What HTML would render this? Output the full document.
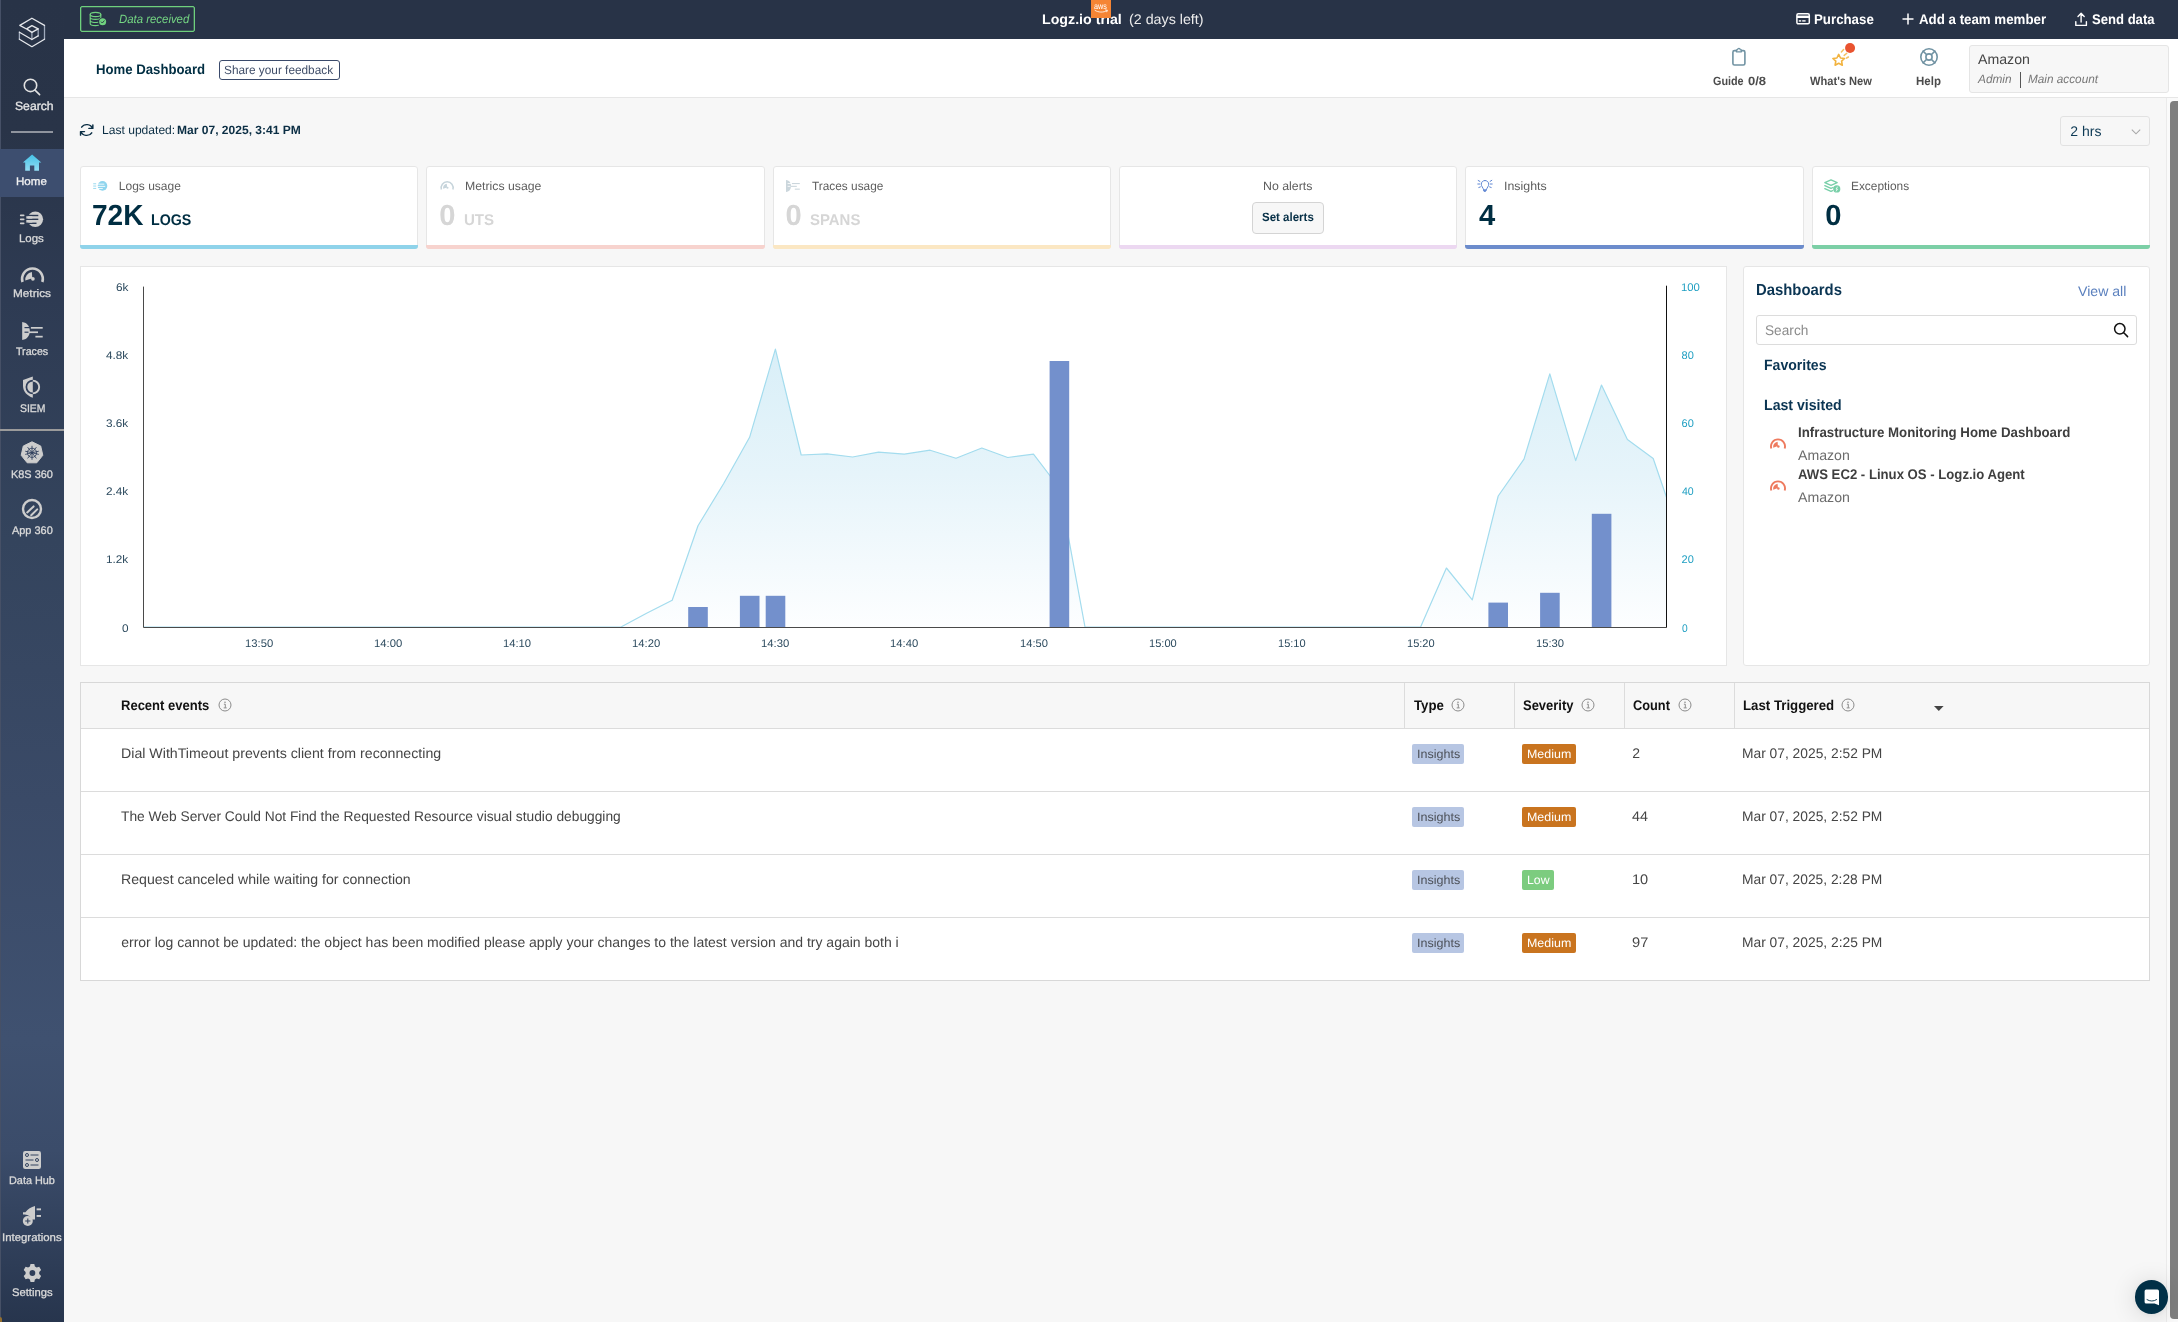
<!DOCTYPE html>
<html>
<head>
<meta charset="utf-8">
<title>Home Dashboard</title>
<style>
*{box-sizing:border-box;margin:0;padding:0}
html,body{width:2178px;height:1322px;overflow:hidden}
body{font-family:"Liberation Sans",sans-serif;background:#f7f7f7;position:relative;color:#444;font-size:14px;line-height:1}
.abs{position:absolute}
svg{position:absolute;overflow:visible}
.t{position:absolute;white-space:nowrap;line-height:1;transform-origin:0 50%;text-rendering:geometricPrecision}
#side{position:absolute;left:0;top:0;width:64px;height:1322px;background:linear-gradient(180deg,#283347 0px,#293448 130px,#2e3b53 300px,#34445d 540px,#3a4a67 800px,#3f5170 1040px,#3b4c6a 1150px,#27354d 1322px)}
#app{position:absolute;left:0;top:0;width:2178px;height:1322px;will-change:transform}
#topbar{position:absolute;left:64px;top:0;width:2114px;height:39px;background:#283347}
#header{position:absolute;left:64px;top:39px;width:2114px;height:59px;background:#fff;border-bottom:1px solid #e6e6e6}
.card{position:absolute;background:#fff;border:1px solid #e6e6e6;border-radius:3px}
.bar{position:absolute;left:-1px;right:-1px;bottom:-1px;height:4px;border-radius:0 0 3px 3px}
.badge{position:absolute;height:20px;border-radius:2px}
</style>
</head>
<body>
<div id="app"><div id="side">
<div class="abs" style="left:0;top:0;width:1px;height:1322px;background:#465066"></div>
<div class="abs" style="left:0;top:149px;width:64px;height:48px;background:#3d4e6f"></div>
<div class="abs" style="left:11px;top:131px;width:42px;height:2px;background:#8f949e"></div>
<div class="abs" style="left:0;top:429px;width:64px;height:2px;background:#9b9b9b"></div>
<svg width="64" height="1322" viewBox="0 0 64 1322" style="left:0;top:0" fill="none">
<!-- logo -->
<g stroke-width="1.3" stroke-linejoin="round" stroke-linecap="round">
<path d="M44.5 25.4 V39.2 M19.4 32.2 V39.2 M31.9 32.4 V39.5 M38.2 28.9 V35.9" stroke="#9ea9bb"/>
<path d="M27 29.3 L19.8 25.4 L31.9 18.2 L44.5 25.4 M44.5 39.2 L31.9 46.7 L19.4 39.2 M19.4 32.2 L31.9 39.5 L38.2 35.9 M38.2 28.9 L31.9 25.6 L26.6 28.9 L31.9 32.4 L38.2 28.9" stroke="#e6e8ec"/>
</g>
<!-- search -->
<g stroke="#e2e2e2" stroke-width="1.6" stroke-linecap="round"><circle cx="30.5" cy="85.4" r="6.2"/><path d="M35 90.2 L39.6 94.6"/></g>
<!-- home -->
<defs><linearGradient id="hg" x1="0" y1="0" x2="0" y2="1"><stop offset="0" stop-color="#45c1e6"/><stop offset="1" stop-color="#93def5"/></linearGradient></defs>
<path d="M32.1 154.6 L41.3 162.6 L39 162.6 L39 170.8 L34.3 170.8 L34.3 165.6 L29.9 165.6 L29.9 170.8 L25.2 170.8 L25.2 162.6 L22.9 162.6 Z" fill="url(#hg)"/>
<!-- logs -->
<g fill="#cfcfcf"><circle cx="35.3" cy="219.2" r="7.8"/>
<rect x="19.9" y="214.6" width="4.6" height="1.7" rx=".8"/><rect x="19.9" y="218.5" width="4.6" height="1.7" rx=".8"/><rect x="19.9" y="222.6" width="4.6" height="1.7" rx=".8"/></g>
<g fill="#2c3a53"><rect x="26" y="214.8" width="12.3" height="1.4"/><rect x="26" y="218.6" width="12.3" height="1.4"/><rect x="26" y="222.6" width="10.5" height="1.4"/></g>
<g fill="#cfcfcf"><rect x="26.3" y="216.2" width="6" height="2.4"/><rect x="26.3" y="220" width="6" height="2.6"/></g>
<!-- metrics -->
<path d="M22.59 282 A10.35 10.35 0 1 1 42.31 282" stroke="#cdcdcd" stroke-width="2.6"/><path d="M25.35 280.6 A7.7 7.7 0 0 1 31.86 271.9 L32.3 278.26 Z" fill="#cdcdcd"/><circle cx="32.9" cy="278.85" r="1.85" fill="#cdcdcd"/>
<!-- traces -->
<g fill="#cdcdcd"><path d="M22.2 322 C27.5 322.6 29.8 327 29.8 331 C29.8 335 27.5 339.4 22.2 340 Z"/><rect x="30.8" y="327" width="11.9" height="1.7"/><rect x="28.6" y="331.4" width="9.4" height="1.7"/><rect x="35.4" y="335.8" width="7.3" height="1.7"/></g>
<g fill="#2f3e5a"><rect x="24.5" y="327" width="6" height="1.2"/><rect x="24.5" y="331.6" width="4" height="1.2"/></g>
<!-- siem -->
<path d="M32.8 376.6 L32.8 397.8 C27 395.8 23 391.6 23 385.8 L23 380 Z" fill="#cdcdcd"/><path d="M32.8 380.6 A6.4 6.4 0 0 1 32.8 393.4" stroke="#cdcdcd" stroke-width="1.9"/><path d="M32.8 393.4 A6.4 6.4 0 0 1 32.8 380.6" stroke="#2f3e5a" stroke-width="1.7"/>
<!-- k8s -->
<path d="M32 441.8 L40.7 446 L42.8 455.3 L36.8 462.8 L27.2 462.8 L21.2 455.3 L23.3 446 Z" fill="#cdcdcd" stroke="#cdcdcd" stroke-width="1" stroke-linejoin="round"/>
<g stroke="#32425f" stroke-width=".9"><circle cx="32" cy="452.8" r="4.6"/><path d="M32 445.8 V459.8 M25.2 451.2 L38.8 454.4 M25.2 454.4 L38.8 451.2 M27.6 447.2 L36.4 458.4 M36.4 447.2 L27.6 458.4"/></g><circle cx="32" cy="452.8" r="1.3" fill="#32425f"/>
<!-- app360 -->
<circle cx="32" cy="509" r="9" stroke="#cdcdcd" stroke-width="2.4"/><g stroke="#cdcdcd" stroke-width="2" stroke-linecap="round"><path d="M27.2 512.4 L33.6 506.4 M31.2 515.2 L37.2 509.4"/></g>
<!-- data hub -->
<rect x="23" y="1151" width="18" height="18" rx="2.2" fill="#cdcdcd"/>
<g stroke="#33435f" stroke-width="1"><circle cx="27" cy="1155" r="1.5"/><path d="M30.5 1155 H38.5"/><circle cx="37" cy="1160" r="1.5"/><path d="M25.5 1160 H33.5"/><circle cx="27" cy="1165" r="1.5"/><path d="M30.5 1165 H38.5"/></g>
<!-- integrations -->
<g fill="#cdcdcd"><path d="M35 1206 L35 1219.6 L31.6 1219.6 C31 1216.4 28.4 1214.6 24.6 1214.4 L23 1214.4 L23 1212.2 L25.4 1212.2 C28 1209.2 31 1207 35 1206 Z"/><rect x="36.6" y="1208.4" width="4.4" height="1.9"/><rect x="36.6" y="1215" width="4.4" height="1.9"/><circle cx="27.8" cy="1221" r="5"/></g>
<path d="M27.8 1218.4 V1223.6 M25.2 1221 H30.4" stroke="#34445f" stroke-width="1.1"/>
<!-- settings -->
<g transform="translate(32.4 1273)"><path id="gear" d="M-1.9 -9 H1.9 L2.5 -6.4 L4.3 -5.4 L6.8 -6.2 L8.7 -2.9 L6.8 -1.1 V1.1 L8.7 2.9 L6.8 6.2 L4.3 5.4 L2.5 6.4 L1.9 9 H-1.9 L-2.5 6.4 L-4.3 5.4 L-6.8 6.2 L-8.7 2.9 L-6.8 1.1 V-1.1 L-8.7 -2.9 L-6.8 -6.2 L-4.3 -5.4 L-2.5 -6.4 Z" fill="#cdcdcd"/><circle cx="0" cy="0" r="2.9" fill="#2f3e59"/></g>
</svg>
</div>
<div class="t" id="t0" style="left:14.82px;top:99.64px;font-size:12px;color:#e6e6e6;transform:scaleX(1.0148);-webkit-text-stroke:.3px #e6e6e6;">Search</div><div class="t" id="t1" style="left:16.29px;top:176.68px;font-size:11px;color:#f2f2f2;transform:scaleX(1.0510);-webkit-text-stroke:.3px #f2f2f2;">Home</div><div class="t" id="t2" style="left:19.33px;top:233.58px;font-size:11px;color:#dadada;transform:scaleX(1.0395);-webkit-text-stroke:.3px #dadada;">Logs</div><div class="t" id="t3" style="left:12.71px;top:288.73px;font-size:11px;color:#dadada;transform:scaleX(1.0716);-webkit-text-stroke:.3px #dadada;">Metrics</div><div class="t" id="t4" style="left:16.07px;top:346.73px;font-size:11px;color:#dadada;transform:scaleX(0.9685);-webkit-text-stroke:.3px #dadada;">Traces</div><div class="t" id="t5" style="left:19.80px;top:403.63px;font-size:11px;color:#dadada;transform:scaleX(0.9479);-webkit-text-stroke:.3px #dadada;">SIEM</div><div class="t" id="t6" style="left:11.08px;top:469.63px;font-size:11px;color:#dadada;transform:scaleX(0.9929);-webkit-text-stroke:.3px #dadada;">K8S 360</div><div class="t" id="t7" style="left:11.99px;top:525.63px;font-size:11px;color:#dadada;transform:scaleX(0.9938);-webkit-text-stroke:.3px #dadada;">App 360</div><div class="t" id="t8" style="left:9.14px;top:1175.83px;font-size:11px;color:#dadada;transform:scaleX(0.9877);-webkit-text-stroke:.3px #dadada;">Data Hub</div><div class="t" id="t9" style="left:2.46px;top:1232.93px;font-size:11px;color:#dadada;transform:scaleX(1.0365);-webkit-text-stroke:.3px #dadada;">Integrations</div><div class="t" id="t10" style="left:11.69px;top:1287.73px;font-size:11px;color:#dadada;transform:scaleX(1.0207);-webkit-text-stroke:.3px #dadada;">Settings</div>
<div id="topbar"></div>
<div class="abs" style="left:80px;top:6px;width:115px;height:26px;border:1px solid #6ed07d;border-radius:2px;box-shadow:inset 0 0 0 .3px #6ed07d"></div>
<svg width="20" height="17" viewBox="0 0 20 17" style="left:89px;top:11px" fill="none" stroke="#70d27f" stroke-width="1.15" stroke-linecap="round">
<ellipse cx="6.5" cy="3.5" rx="5.3" ry="2.1"/><path d="M1.2 3.5 V12.4 C1.2 13.8 3.8 14.6 6.5 14.6 C7.6 14.6 8.6 14.5 9.4 14.3 M11.8 3.5 V6.8 M1.2 6.5 C1.2 8.9 11.8 8.9 11.8 6.5 M1.2 9.5 C1.2 11.2 5.4 11.9 9 11.3"/>
<circle cx="13.65" cy="10.8" r="4.3" fill="#283347" stroke="none"/><circle cx="13.65" cy="10.8" r="3.5" fill="#70d27f" stroke="none"/><path d="M12.2 10.9 L13.3 12 L15.2 9.8" stroke="#283347" stroke-width=".9"/></svg>
<div class="t" id="t11" style="left:118.80px;top:12.74px;font-size:12px;color:#74d683;font-style:italic;transform:scaleX(0.9493);">Data received</div>
<div class="t" id="t12" style="left:1042.22px;top:12.16px;font-size:14px;color:#fff;font-weight:bold;transform:scaleX(1.0153);">Logz.io trial</div>
<div class="t" id="t13" style="left:1129.41px;top:12.16px;font-size:14px;color:#ececec;transform:scaleX(1.0187);">(2 days left)</div>
<div class="abs" style="left:1091px;top:0;width:20px;height:18px;background:#f58534"></div>
<svg width="20" height="18" viewBox="0 0 20 18" style="left:1091px;top:0" fill="none" stroke="#fff" stroke-linecap="round">
<path d="M4 10.4 C7.4 12.6 12.4 12.6 15.8 10.8 M14.4 10 L16.4 10.2 L15.8 11.8" stroke-width=".8"/></svg>
<div class="t" id="t14" style="left:1094.28px;top:2.00px;font-size:8.6px;color:#fff;transform:scaleX(0.8422);">aws</div>
<!-- purchase -->
<svg width="15" height="12" viewBox="0 0 15 12" style="left:1795.5px;top:13px" fill="none"><rect x=".9" y=".8" width="12.4" height="10" rx="1.4" stroke="#fff" stroke-width="1.5"/><rect x=".9" y="2.6" width="12.4" height="2.4" fill="#fff"/><rect x="2.8" y="7.2" width="2.4" height="1.4" fill="#fff"/><rect x="6.2" y="7.2" width="3.4" height="1.4" fill="#fff"/></svg>
<div class="t" id="t15" style="left:1814.00px;top:12.16px;font-size:14px;color:#fff;font-weight:bold;transform:scaleX(0.9481);">Purchase</div>
<svg width="12" height="12" viewBox="0 0 12 12" style="left:1901.5px;top:13.2px" stroke="#fff" stroke-width="1.5"><path d="M6 .5 V11.5 M.5 6 H11.5"/></svg>
<div class="t" id="t16" style="left:1918.89px;top:12.16px;font-size:14px;color:#fff;font-weight:bold;transform:scaleX(0.9498);">Add a team member</div>
<svg width="14" height="15" viewBox="0 0 14 15" style="left:2073.5px;top:11.5px" fill="none" stroke="#fff" stroke-width="1.4" stroke-linecap="round" stroke-linejoin="round"><path d="M1.8 9.6 V13.4 H12.4 V9.6 M7.1 10 V1.4 M4 4.4 L7.1 1.3 L10.2 4.4"/></svg>
<div class="t" id="t17" style="left:2092.18px;top:12.16px;font-size:14px;color:#fff;font-weight:bold;transform:scaleX(0.9347);">Send data</div>

<div id="header"></div>
<div class="t" id="t18" style="left:96.26px;top:62.16px;font-size:14px;color:#002e42;font-weight:bold;transform:scaleX(0.9411);">Home Dashboard</div>
<div class="abs" style="left:219px;top:60px;width:121px;height:20px;border:1px solid #3a4a6b;border-radius:3px"></div>
<div class="t" id="t19" style="left:223.99px;top:64.14px;font-size:12px;color:#3f4d68;transform:scaleX(0.9851);">Share your feedback</div>
<!-- guide -->
<svg width="16" height="20" viewBox="0 0 16 20" style="left:1731px;top:47px" fill="none" stroke="#7193a3" stroke-width="1.6" stroke-linejoin="round"><rect x="1.9" y="3.6" width="12" height="14.4" rx="1.6"/><path d="M5.4 3.6 V2.8 H6.6 C6.6 .9 9.2 .9 9.2 2.8 H10.4 V4.8 H5.4 Z" fill="#fff" stroke-width="1.3"/></svg>
<div class="t" id="t20" style="left:1712.75px;top:75.14px;font-size:12px;color:#4c4c4c;font-weight:bold;transform:scaleX(0.8994);">Guide</div><div class="t" id="t21" style="left:1748.00px;top:75.14px;font-size:12px;color:#4c4c4c;font-weight:bold;transform:scaleX(1.0853);">0/8</div>
<!-- whats new -->
<svg width="26" height="24" viewBox="0 0 26 24" style="left:1829px;top:42px" fill="none"><path d="M9.7 12.4 L11.5 16 L15.5 16.5 L12.6 19.2 L13.3 23.2 L9.7 21.3 L6.1 23.2 L6.8 19.2 L3.9 16.5 L7.9 16 Z" stroke="#f2b33f" stroke-width="1.6" stroke-linejoin="round"/><path d="M12.4 10 L14.6 7.6 M15.2 13.4 L17.8 11.2 M17.4 16.2 L19.4 15" stroke="#f4c062" stroke-width="1.5" stroke-linecap="round"/><circle cx="21.05" cy="6" r="5" fill="#e9532f"/></svg>
<div class="t" id="t22" style="left:1810.12px;top:75.14px;font-size:12px;color:#4c4c4c;font-weight:bold;transform:scaleX(0.9253);">What&#39;s New</div>
<!-- help -->
<svg width="20" height="20" viewBox="0 0 20 20" style="left:1919px;top:47px" fill="none" stroke="#7193a3" stroke-width="1.6"><circle cx="10" cy="10" r="8.2"/><circle cx="10" cy="10" r="3.1"/><path d="M3.6 3.6 L7.7 7.7 M16.4 3.6 L12.3 7.7 M3.6 16.4 L7.7 12.3 M16.4 16.4 L12.3 12.3"/></svg>
<div class="t" id="t23" style="left:1915.92px;top:75.14px;font-size:12px;color:#4c4c4c;font-weight:bold;transform:scaleX(0.9574);">Help</div>
<div class="abs" style="left:1969px;top:45px;width:200px;height:48px;background:#f7f7f7;border:1px solid #e5e5e5;border-radius:3px"></div>
<div class="t" id="t24" style="left:1978.15px;top:52.36px;font-size:14px;color:#444;transform:scaleX(1.0096);">Amazon</div>
<div class="t" id="t25" style="left:1978.27px;top:73.14px;font-size:12px;color:#777;font-style:italic;transform:scaleX(0.9872);">Admin</div>
<div class="abs" style="left:2020px;top:72px;width:1px;height:16px;background:#555"></div>
<div class="t" id="t26" style="left:2028.42px;top:73.14px;font-size:12px;color:#777;font-style:italic;transform:scaleX(0.9808);">Main account</div>

<svg width="15.4" height="14" viewBox="0 0 14 14" preserveAspectRatio="none" style="left:79.4px;top:122.8px" fill="none" stroke="#0b2e44" stroke-width="1.3" stroke-linecap="round" stroke-linejoin="round">
<path d="M12.2 5.4 A5.4 5.4 0 0 0 2.4 4.2 M1.8 8.6 A5.4 5.4 0 0 0 11.6 9.8 M12.6 1.8 V5.4 H9 M1.4 12.2 V8.6 H5"/></svg>
<div class="t" id="t27" style="left:102.39px;top:123.84px;font-size:12px;color:#0b2e44;transform:scaleX(1.0064);">Last updated:</div><div class="t" id="t28" style="left:177.38px;top:123.84px;font-size:12px;color:#0b2e44;font-weight:bold;transform:scaleX(1.0037);">Mar 07, 2025, 3:41 PM</div>
<div class="abs" style="left:2060px;top:116px;width:90px;height:30px;border:1px solid #e2e2e2;border-radius:3px;background:#f7f7f7"></div>
<div class="t" id="t29" style="left:2070.37px;top:124.36px;font-size:14px;color:#0e3a55;">2 hrs</div>
<svg width="10" height="6" viewBox="0 0 10 6" style="left:2131px;top:128.6px" fill="none" stroke="#a8a8a8" stroke-width="1.1"><path d="M.8 .6 L5 4.8 L9.2 .6"/></svg>
<div class="card" style="left:80px;top:166px;width:338px;height:83px"><div class="bar" style="background:#8fd3ea"></div></div>
<div class="card" style="left:426px;top:166px;width:339px;height:83px"><div class="bar" style="background:#f7d3ce"></div></div>
<div class="card" style="left:773px;top:166px;width:338px;height:83px"><div class="bar" style="background:#fbe7c3"></div></div>
<div class="card" style="left:1119px;top:166px;width:338px;height:83px"><div class="bar" style="background:#ecd8f1"></div></div>
<div class="card" style="left:1465px;top:166px;width:339px;height:83px"><div class="bar" style="background:#6c8ccc"></div></div>
<div class="card" style="left:1812px;top:166px;width:338px;height:83px"><div class="bar" style="background:#7ccfa6"></div></div>
<div class="t" id="t30" style="left:118.81px;top:179.94px;font-size:12px;color:#5e5e5e;">Logs usage</div><div class="t" id="t31" style="left:92.14px;top:201.74px;font-size:29.2px;color:#002e42;font-weight:bold;transform:scaleX(0.9609);">72K</div><div class="t" id="t32" style="left:150.86px;top:212.88px;font-size:15.5px;color:#002e42;font-weight:bold;transform:scaleX(0.9184);">LOGS</div><div class="t" id="t33" style="left:465.17px;top:179.94px;font-size:12px;color:#5e5e5e;transform:scaleX(1.0235);">Metrics usage</div><div class="t" id="t34" style="left:439.19px;top:201.74px;font-size:29.2px;color:#d6d6d6;font-weight:bold;">0</div><div class="t" id="t35" style="left:463.65px;top:212.88px;font-size:15.5px;color:#d6d6d6;font-weight:bold;transform:scaleX(0.9709);">UTS</div><div class="t" id="t36" style="left:812.18px;top:179.94px;font-size:12px;color:#5e5e5e;transform:scaleX(0.9870);">Traces usage</div><div class="t" id="t37" style="left:785.60px;top:201.74px;font-size:29.2px;color:#d6d6d6;font-weight:bold;">0</div><div class="t" id="t38" style="left:810.20px;top:212.88px;font-size:15.5px;color:#d6d6d6;font-weight:bold;transform:scaleX(0.9635);">SPANS</div><div class="t" id="t39" style="left:1262.75px;top:179.94px;font-size:12px;color:#5e5e5e;transform:scaleX(1.0276);">No alerts</div><div class="abs" style="left:1252px;top:202px;width:72px;height:32px;background:#f7f7f7;border:1px solid #d4d4d4;border-radius:4px"></div>
<div class="t" id="t40" style="left:1261.73px;top:211.14px;font-size:12px;color:#062f46;font-weight:bold;transform:scaleX(0.9586);">Set alerts</div><div class="t" id="t41" style="left:1504.44px;top:179.94px;font-size:12px;color:#5e5e5e;transform:scaleX(1.0309);">Insights</div><div class="t" id="t42" style="left:1479.00px;top:201.74px;font-size:29.2px;color:#002e42;font-weight:bold;">4</div><div class="t" id="t43" style="left:1851.01px;top:179.94px;font-size:12px;color:#5e5e5e;transform:scaleX(0.9904);">Exceptions</div><div class="t" id="t44" style="left:1825.19px;top:201.74px;font-size:29.2px;color:#002e42;font-weight:bold;">0</div>
<!-- logs usage icon -->
<svg width="15" height="10" viewBox="0 0 15 10" style="left:92.6px;top:180.9px"><circle cx="9.5" cy="4.9" r="4.8" fill="#8fd5ee"/><g fill="#fff"><rect x="4" y="2.7" width="7.3" height=".85"/><rect x="4" y="4.9" width="8.2" height=".85"/><rect x="4.4" y="7.1" width="5.4" height=".8"/></g><g fill="#a4ddf1"><rect x=".2" y="2.2" width="3" height="1.1"/><rect x=".2" y="4.5" width="3" height="1.1"/><rect x=".2" y="6.9" width="3" height="1.1"/></g></svg>
<!-- metrics usage icon -->
<svg width="15" height="11" viewBox="0 0 15 11" style="left:439.5px;top:180.4px" fill="none"><path d="M1.4 9.5 A6 6 0 1 1 12.9 9.5" stroke="#c6d4db" stroke-width="1.5"/><path d="M3.1 8.8 A4.4 4.4 0 0 1 6.8 3.7 L7.05 7.4 Z" fill="#c6d4db"/><circle cx="7.45" cy="7.7" r="1.05" fill="#c6d4db"/></svg>
<!-- traces usage icon -->
<svg width="15" height="12" viewBox="0 0 15 12" style="left:786px;top:180px" fill="#cbd6dc"><path d="M0 0 C3.6 .4 5 3.2 5 6 C5 8.8 3.6 11.6 0 12 Z"/><rect x="5.8" y="3" width="8" height="1.1"/><rect x="4.6" y="5.8" width="6.2" height="1.1"/><rect x="8.8" y="8.6" width="5" height="1.1"/><g fill="#fff"><rect x="1.6" y="3" width="4" height=".8"/><rect x="1.6" y="5.9" width="2.8" height=".8"/></g></svg>
<!-- insights icon -->
<svg width="16" height="14" viewBox="0 0 16 14" style="left:1477px;top:179px" fill="none" stroke="#5f86d2" stroke-width="1" stroke-linecap="round" stroke-linejoin="round"><path d="M8 1.5 C5.7 1.5 4.3 3.2 4.3 5.2 C4.3 7.3 5.9 8.4 6.7 10.9 H9.3 C10.1 8.4 11.7 7.3 11.7 5.2 C11.7 3.2 10.3 1.5 8 1.5 Z"/><path d="M6.7 11.3 H9.3 L8 12.7 Z" fill="#5f86d2"/><path d="M1.2 1.5 L2.9 2.4 M14.8 1.3 L13.1 2.4 M.8 5 H2.8 M13.2 5 H15.2 M1.8 8.5 L3.4 7.9 M14.2 8.5 L12.6 7.9"/></svg>
<!-- exceptions icon -->
<svg width="17" height="15" viewBox="0 0 17 15" style="left:1824px;top:179px" fill="none" stroke="#78cfa8" stroke-width="1.3" stroke-linejoin="round" stroke-linecap="round"><path d="M7 .8 L13.2 3.6 L7 6.4 L.8 3.6 Z M.8 6.6 L7 9.4 L9 8.5 M.8 9.6 L7 12.4 L8.6 11.7"/><circle cx="12.75" cy="9.9" r="3.6" fill="#78cfa8" stroke="none"/><path d="M13.4 8 L12 10.1 H13.5 L12.3 12" stroke="#fff" stroke-width=".8"/></svg>
<div class="card" style="left:80px;top:266px;width:1647px;height:400px;border-radius:0"></div>
<div class="t" id="t45" style="left:116.08px;top:283.03px;font-size:11px;color:#2c4a5e;transform:scaleX(1.0700);">6k</div><div class="t" id="t46" style="left:106.30px;top:351.03px;font-size:11px;color:#2c4a5e;transform:scaleX(1.0700);">4.8k</div><div class="t" id="t47" style="left:106.25px;top:419.03px;font-size:11px;color:#2c4a5e;transform:scaleX(1.0700);">3.6k</div><div class="t" id="t48" style="left:106.28px;top:487.03px;font-size:11px;color:#2c4a5e;transform:scaleX(1.0700);">2.4k</div><div class="t" id="t49" style="left:106.30px;top:555.03px;font-size:11px;color:#2c4a5e;transform:scaleX(1.0700);">1.2k</div><div class="t" id="t50" style="left:122.20px;top:623.83px;font-size:11px;color:#2c4a5e;transform:scaleX(1.0700);">0</div><div class="t" id="t51" style="left:244.85px;top:638.93px;font-size:11px;color:#2c4a5e;transform:scaleX(1.0221);">13:50</div><div class="t" id="t52" style="left:374.07px;top:638.93px;font-size:11px;color:#2c4a5e;transform:scaleX(1.0235);">14:00</div><div class="t" id="t53" style="left:503.39px;top:638.93px;font-size:11px;color:#2c4a5e;transform:scaleX(1.0216);">14:10</div><div class="t" id="t54" style="left:631.93px;top:638.93px;font-size:11px;color:#2c4a5e;transform:scaleX(1.0222);">14:20</div><div class="t" id="t55" style="left:761.03px;top:638.93px;font-size:11px;color:#2c4a5e;transform:scaleX(1.0256);">14:30</div><div class="t" id="t56" style="left:890.15px;top:638.93px;font-size:11px;color:#2c4a5e;transform:scaleX(1.0222);">14:40</div><div class="t" id="t57" style="left:1019.73px;top:638.93px;font-size:11px;color:#2c4a5e;transform:scaleX(1.0140);">14:50</div><div class="t" id="t58" style="left:1148.81px;top:638.93px;font-size:11px;color:#2c4a5e;transform:scaleX(1.0066);">15:00</div><div class="t" id="t59" style="left:1277.97px;top:638.93px;font-size:11px;color:#2c4a5e;transform:scaleX(1.0042);">15:10</div><div class="t" id="t60" style="left:1407.04px;top:638.93px;font-size:11px;color:#2c4a5e;transform:scaleX(1.0052);">15:20</div><div class="t" id="t61" style="left:1535.84px;top:638.93px;font-size:11px;color:#2c4a5e;transform:scaleX(1.0200);">15:30</div><div class="t" id="t62" style="left:1681.00px;top:282.83px;font-size:11px;color:#1f9fc2;transform:scaleX(1.0298);">100</div><div class="t" id="t63" style="left:1681.62px;top:350.93px;font-size:11px;color:#1f9fc2;">80</div><div class="t" id="t64" style="left:1681.56px;top:418.93px;font-size:11px;color:#1f9fc2;">60</div><div class="t" id="t65" style="left:1681.50px;top:486.93px;font-size:11px;color:#1f9fc2;transform:scaleX(0.9602);">40</div><div class="t" id="t66" style="left:1681.62px;top:554.93px;font-size:11px;color:#1f9fc2;">20</div><div class="t" id="t67" style="left:1681.73px;top:623.63px;font-size:11px;color:#1f9fc2;transform:scaleX(0.9300);">0</div><svg width="2178" height="1322" viewBox="0 0 2178 1322" style="left:0;top:0" fill="none">
<defs><linearGradient id="ag" gradientUnits="userSpaceOnUse" x1="0" y1="349" x2="0" y2="627"><stop offset="0" stop-color="#d9eff8"/><stop offset=".45" stop-color="#e6f4fa"/><stop offset="1" stop-color="#fdfeff"/></linearGradient></defs>
<path d="M143.5 627.0 L621.0 627.0 L646.6 613.2 L672.2 600.2 L698.0 525.7 L723.7 483.5 L749.6 437.3 L775.4 349.2 L801.2 455.0 L827.0 453.8 L852.6 457.0 L878.5 452.2 L904.3 454.2 L930.1 450.2 L956.0 458.3 L981.8 448.0 L1007.7 457.5 L1033.5 454.2 L1059.4 488.0 L1085.0 627.0 L1420.6 627.0 L1446.4 568.0 L1472.3 599.8 L1498.2 496.0 L1524.0 459.1 L1549.8 373.8 L1575.7 460.6 L1601.5 385.0 L1627.4 439.4 L1653.2 458.5 L1666.4 497.0 L1666.4 627 L143.5 627 Z" fill="url(#ag)"/>
<path d="M143.5 627.0 L621.0 627.0 L646.6 613.2 L672.2 600.2 L698.0 525.7 L723.7 483.5 L749.6 437.3 L775.4 349.2 L801.2 455.0 L827.0 453.8 L852.6 457.0 L878.5 452.2 L904.3 454.2 L930.1 450.2 L956.0 458.3 L981.8 448.0 L1007.7 457.5 L1033.5 454.2 L1059.4 488.0 L1085.0 627.0 L1420.6 627.0 L1446.4 568.0 L1472.3 599.8 L1498.2 496.0 L1524.0 459.1 L1549.8 373.8 L1575.7 460.6 L1601.5 385.0 L1627.4 439.4 L1653.2 458.5 L1666.4 497.0" stroke="#a3dcee" stroke-width="1.2" stroke-linejoin="round"/>
<rect x="688.2" y="607.0" width="19.6" height="20.0" fill="#7390cc"/><rect x="739.9" y="595.8" width="19.6" height="31.2" fill="#7390cc"/><rect x="765.7" y="595.8" width="19.6" height="31.2" fill="#7390cc"/><rect x="1049.6" y="361.0" width="19.6" height="266.0" fill="#7390cc"/><rect x="1488.4" y="602.6" width="19.6" height="24.4" fill="#7390cc"/><rect x="1540.1" y="592.8" width="19.6" height="34.2" fill="#7390cc"/><rect x="1591.8" y="513.8" width="19.6" height="113.2" fill="#7390cc"/>
<path d="M143.5 286.6 V627.5 H1666.5" stroke="#4a4a4a" stroke-width="1"/>
<path d="M1666.5 285.7 V627.5" stroke="#111" stroke-width="1"/>
</svg>
<div class="card" style="left:1743px;top:266px;width:407px;height:400px"></div>
<div class="t" id="t68" style="left:1755.50px;top:283.28px;font-size:16px;color:#0b3553;font-weight:bold;transform:scaleX(0.9290);">Dashboards</div><div class="t" id="t69" style="left:2078.11px;top:284.36px;font-size:14px;color:#5b80be;transform:scaleX(1.0075);">View all</div><div class="abs" style="left:1756px;top:315px;width:381px;height:30px;border:1px solid #dcdcdc;border-radius:3px;background:#fff"></div>
<div class="t" id="t70" style="left:1764.63px;top:322.56px;font-size:14px;color:#8b8b8b;transform:scaleX(0.9770);">Search</div><svg width="16" height="16" viewBox="0 0 16 16" style="left:2113px;top:322px" fill="none" stroke="#111" stroke-width="1.5" stroke-linecap="round"><circle cx="6.8" cy="6.8" r="5.2"/><path d="M10.8 10.8 L14.6 14.6"/></svg>
<div class="t" id="t71" style="left:1764.46px;top:358.37px;font-size:15px;color:#0b3553;font-weight:bold;transform:scaleX(0.9373);">Favorites</div><div class="t" id="t72" style="left:1763.65px;top:398.07px;font-size:15px;color:#0b3553;font-weight:bold;transform:scaleX(0.9419);">Last visited</div><div class="t" id="t73" style="left:1798.05px;top:425.36px;font-size:14px;color:#3f3f3f;font-weight:bold;transform:scaleX(0.9486);">Infrastructure Monitoring Home Dashboard</div><div class="t" id="t74" style="left:1798.17px;top:447.56px;font-size:14px;color:#6b6b6b;transform:scaleX(1.0090);">Amazon</div><div class="t" id="t75" style="left:1797.88px;top:466.76px;font-size:14px;color:#3f3f3f;font-weight:bold;transform:scaleX(0.9394);">AWS EC2 - Linux OS - Logz.io Agent</div><div class="t" id="t76" style="left:1798.12px;top:489.56px;font-size:14px;color:#6b6b6b;transform:scaleX(1.0107);">Amazon</div><svg width="16" height="12" viewBox="0 0 16 12" style="left:1770px;top:437.9px" fill="none"><path d="M1.34 10.56 A7 7 0 1 1 14.66 10.56" stroke="#ee7a5e" stroke-width="1.9"/><path d="M3.2 9.7 A5.2 5.2 0 0 1 7.6 3.7 L7.9 8 Z" fill="#ee7a5e"/><circle cx="8.35" cy="8.4" r="1.25" fill="#ee7a5e"/></svg>
<svg width="16" height="12" viewBox="0 0 16 12" style="left:1770px;top:480.1px" fill="none"><path d="M1.34 10.56 A7 7 0 1 1 14.66 10.56" stroke="#ee7a5e" stroke-width="1.9"/><path d="M3.2 9.7 A5.2 5.2 0 0 1 7.6 3.7 L7.9 8 Z" fill="#ee7a5e"/><circle cx="8.35" cy="8.4" r="1.25" fill="#ee7a5e"/></svg>

<div class="abs" style="left:80px;top:682px;width:2070px;height:299px;background:#fff;border:1px solid #d8d8d8"></div>
<div class="abs" style="left:81px;top:683px;width:2068px;height:45px;background:#f7f7f7"></div>
<div class="abs" style="left:81px;top:728px;width:2068px;height:1px;background:#dcdcdc"></div>
<div class="abs" style="left:81px;top:791px;width:2068px;height:1px;background:#dcdcdc"></div>
<div class="abs" style="left:81px;top:854px;width:2068px;height:1px;background:#dcdcdc"></div>
<div class="abs" style="left:81px;top:917px;width:2068px;height:1px;background:#dcdcdc"></div>
<div class="abs" style="left:1404px;top:683px;width:1px;height:45px;background:#dcdcdc"></div>
<div class="abs" style="left:1514px;top:683px;width:1px;height:45px;background:#dcdcdc"></div>
<div class="abs" style="left:1624px;top:683px;width:1px;height:45px;background:#dcdcdc"></div>
<div class="abs" style="left:1734px;top:683px;width:1px;height:45px;background:#dcdcdc"></div>
<div class="t" id="t77" style="left:120.83px;top:698.06px;font-size:14px;color:#111;font-weight:bold;transform:scaleX(0.9294);">Recent events</div><svg width="14" height="14" viewBox="0 0 14 14" style="left:217.9px;top:697.8px" fill="none"><circle cx="7" cy="7" r="6" stroke="#8c8c8c" stroke-width="1"/><path d="M5.9 6.2 H7.3 V9.8 M5.7 9.9 H8.7" stroke="#8c8c8c" stroke-width="1"/><circle cx="7" cy="4.2" r=".8" fill="#8c8c8c"/></svg>
<div class="t" id="t78" style="left:1413.61px;top:698.06px;font-size:14px;color:#111;font-weight:bold;transform:scaleX(0.9437);">Type</div><svg width="14" height="14" viewBox="0 0 14 14" style="left:1450.7px;top:697.8px" fill="none"><circle cx="7" cy="7" r="6" stroke="#8c8c8c" stroke-width="1"/><path d="M5.9 6.2 H7.3 V9.8 M5.7 9.9 H8.7" stroke="#8c8c8c" stroke-width="1"/><circle cx="7" cy="4.2" r=".8" fill="#8c8c8c"/></svg>
<div class="t" id="t79" style="left:1522.91px;top:698.06px;font-size:14px;color:#111;font-weight:bold;transform:scaleX(0.9253);">Severity</div><svg width="14" height="14" viewBox="0 0 14 14" style="left:1580.8px;top:697.8px" fill="none"><circle cx="7" cy="7" r="6" stroke="#8c8c8c" stroke-width="1"/><path d="M5.9 6.2 H7.3 V9.8 M5.7 9.9 H8.7" stroke="#8c8c8c" stroke-width="1"/><circle cx="7" cy="4.2" r=".8" fill="#8c8c8c"/></svg>
<div class="t" id="t80" style="left:1633.47px;top:698.06px;font-size:14px;color:#111;font-weight:bold;transform:scaleX(0.9127);">Count</div><svg width="14" height="14" viewBox="0 0 14 14" style="left:1677.9px;top:697.8px" fill="none"><circle cx="7" cy="7" r="6" stroke="#8c8c8c" stroke-width="1"/><path d="M5.9 6.2 H7.3 V9.8 M5.7 9.9 H8.7" stroke="#8c8c8c" stroke-width="1"/><circle cx="7" cy="4.2" r=".8" fill="#8c8c8c"/></svg>
<div class="t" id="t81" style="left:1743.06px;top:698.06px;font-size:14px;color:#111;font-weight:bold;transform:scaleX(0.9452);">Last Triggered</div><svg width="14" height="14" viewBox="0 0 14 14" style="left:1841.0px;top:697.8px" fill="none"><circle cx="7" cy="7" r="6" stroke="#8c8c8c" stroke-width="1"/><path d="M5.9 6.2 H7.3 V9.8 M5.7 9.9 H8.7" stroke="#8c8c8c" stroke-width="1"/><circle cx="7" cy="4.2" r=".8" fill="#8c8c8c"/></svg>
<svg width="10" height="6" viewBox="0 0 10 6" style="left:1934px;top:706.3px"><path d="M0 0 H9.6 L4.8 5 Z" fill="#444"/></svg>
<div class="t" id="t82" style="left:120.51px;top:746.16px;font-size:14px;color:#454545;transform:scaleX(1.0128);">Dial WithTimeout prevents client from reconnecting</div><div class="badge" style="left:1412px;top:744.0px;width:52px;background:#b7c6e3"></div>
<div class="t" id="t83" style="left:1416.75px;top:747.54px;font-size:12px;color:#4d5159;transform:scaleX(1.0433);">Insights</div><div class="badge" style="left:1522px;top:744.0px;width:54px;background:#c9741f"></div>
<div class="t" id="t84" style="left:1527.42px;top:747.54px;font-size:12px;color:#fff;transform:scaleX(1.0367);">Medium</div><div class="t" id="t85" style="left:1632.29px;top:746.16px;font-size:14px;color:#454545;">2</div><div class="t" id="t86" style="left:1741.99px;top:746.16px;font-size:14px;color:#454545;transform:scaleX(0.9856);">Mar 07, 2025, 2:52 PM</div><div class="t" id="t87" style="left:121.12px;top:809.16px;font-size:14px;color:#454545;transform:scaleX(0.9839);">The Web Server Could Not Find the Requested Resource visual studio debugging</div><div class="badge" style="left:1412px;top:807.0px;width:52px;background:#b7c6e3"></div>
<div class="t" id="t88" style="left:1416.68px;top:810.54px;font-size:12px;color:#4d5159;transform:scaleX(1.0487);">Insights</div><div class="badge" style="left:1522px;top:807.0px;width:54px;background:#c9741f"></div>
<div class="t" id="t89" style="left:1526.87px;top:810.54px;font-size:12px;color:#fff;transform:scaleX(1.0366);">Medium</div><div class="t" id="t90" style="left:1632.33px;top:809.16px;font-size:14px;color:#454545;transform:scaleX(1.0192);">44</div><div class="t" id="t91" style="left:1741.63px;top:809.16px;font-size:14px;color:#454545;transform:scaleX(0.9856);">Mar 07, 2025, 2:52 PM</div><div class="t" id="t92" style="left:120.59px;top:872.16px;font-size:14px;color:#454545;transform:scaleX(1.0089);">Request canceled while waiting for connection</div><div class="badge" style="left:1412px;top:870.0px;width:52px;background:#b7c6e3"></div>
<div class="t" id="t93" style="left:1416.72px;top:873.54px;font-size:12px;color:#4d5159;transform:scaleX(1.0441);">Insights</div><div class="badge" style="left:1522px;top:870.0px;width:32px;background:#7ccc7f"></div>
<div class="t" id="t94" style="left:1526.76px;top:873.54px;font-size:12px;color:#fff;transform:scaleX(1.0218);">Low</div><div class="t" id="t95" style="left:1631.51px;top:872.16px;font-size:14px;color:#454545;transform:scaleX(1.0398);">10</div><div class="t" id="t96" style="left:1741.67px;top:872.16px;font-size:14px;color:#454545;transform:scaleX(0.9851);">Mar 07, 2025, 2:28 PM</div><div class="t" id="t97" style="left:121.23px;top:935.16px;font-size:14px;color:#454545;">error log cannot be updated: the object has been modified please apply your changes to the latest version and try again both i</div><div class="badge" style="left:1412px;top:933.0px;width:52px;background:#b7c6e3"></div>
<div class="t" id="t98" style="left:1416.75px;top:936.54px;font-size:12px;color:#4d5159;transform:scaleX(1.0433);">Insights</div><div class="badge" style="left:1522px;top:933.0px;width:54px;background:#c9741f"></div>
<div class="t" id="t99" style="left:1527.42px;top:936.54px;font-size:12px;color:#fff;transform:scaleX(1.0367);">Medium</div><div class="t" id="t100" style="left:1631.84px;top:935.16px;font-size:14px;color:#454545;transform:scaleX(1.0472);">97</div><div class="t" id="t101" style="left:1741.99px;top:935.16px;font-size:14px;color:#454545;transform:scaleX(0.9856);">Mar 07, 2025, 2:25 PM</div>
<div class="abs" style="left:0;top:1317px;width:2px;height:5px;background:#96702f;border-radius:0 2px 0 0"></div>
<div class="abs" style="left:2166px;top:98px;width:12px;height:1224px;background:#fafafa;border-left:1px solid #ebebeb"></div>
<div class="abs" style="left:2170px;top:101px;width:10px;height:1218px;background:#7f7f7f;border-radius:4px 0 0 4px/4px 0 0 4px"></div>
<div class="abs" style="left:2135.3px;top:1280.4px;width:33.2px;height:33.2px;border-radius:50%;background:#013047;box-shadow:0 1px 6px rgba(0,0,0,.06),0 2px 26px rgba(0,0,0,.14)"></div>
<svg width="16" height="17" viewBox="0 0 16 17" style="left:2144.3px;top:1288.9px"><path d="M2.2 .6 H13.4 Q15 .6 15 2.2 V16.2 L10.6 14.6 H2.2 Q.6 14.6 .6 13 V2.2 Q.6 .6 2.2 .6 Z" fill="#fff"/><path d="M3 10.6 Q7.8 13.6 12.6 10.6" stroke="#013047" stroke-width=".9" fill="none" stroke-linecap="round"/></svg>
</div>
</body>
</html>
